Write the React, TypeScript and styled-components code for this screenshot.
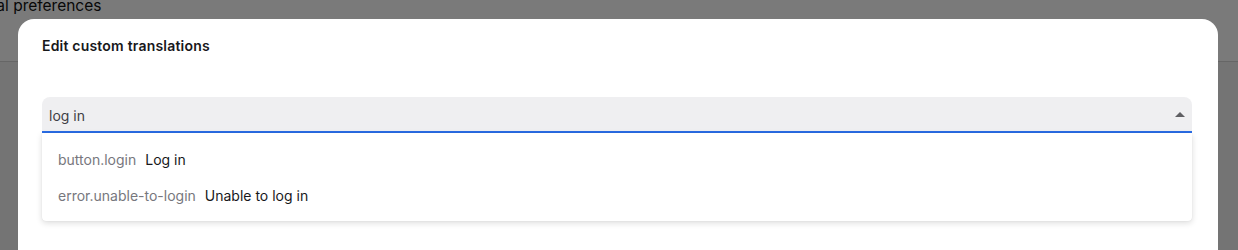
import React from "react";
import { createGlobalStyle, styled } from "styled-components";

const GlobalStyle = createGlobalStyle`
  html, body {
    margin: 0;
    padding: 0;
    background: #f2f2f2;
    font-family: Inter, "Noto Sans", "Liberation Sans", sans-serif;
  }
  #root {
    height: 250px;
    overflow: hidden;
  }
`;

type Option = {
  key: string;
  value: string;
};

const options: Option[] = [
  { key: "button.login", value: "Log in" },
  { key: "error.unable-to-login", value: "Unable to log in" },
];

function App() {
  return (
    <>
      <GlobalStyle />
      <Page>
        <Header>
          <PageTitle>Personal preferences</PageTitle>
        </Header>
        <Overlay>
          <Modal>
            <Title>Edit custom translations</Title>
            <Combo>
              <SearchField>
                <SearchInput defaultValue="log in" />
                <Arrow viewBox="0 0 10 5" aria-hidden="true">
                  <path d="M0 5 L5 0 L10 5 Z" />
                </Arrow>
              </SearchField>
              <Listbox>
                {options.map((opt) => (
                  <OptionRow key={opt.key}>
                    <OptionKey>{opt.key}</OptionKey>
                    <OptionValue>{opt.value}</OptionValue>
                  </OptionRow>
                ))}
              </Listbox>
            </Combo>
          </Modal>
        </Overlay>
      </Page>
    </>
  );
}

export default App;

const Page = styled.div`
  position: relative;
  height: 250px;
  overflow: hidden;
`;

const Header = styled.div`
  height: 62px;
  background: #ffffff;
  border-bottom: 1px solid #d6d6d6;
  box-sizing: border-box;
`;

const PageTitle = styled.h1`
  margin: 0 0 0 -55px;
  font-size: 15.5px;
  line-height: 12px;
  font-weight: 400;
  color: #111;
  white-space: nowrap;
`;

const Overlay = styled.div`
  position: absolute;
  inset: 0;
  background: rgba(0, 0, 0, 0.52);
  display: flex;
  justify-content: center;
  padding: 19px 20px 0 18px;
`;

const Modal = styled.div`
  flex: 1;
  height: 300px;
  background: #ffffff;
  border-radius: 16px;
  padding: 17px 26px 17px 24px;
  box-sizing: border-box;
  display: flex;
  flex-direction: column;
`;

const Title = styled.h2`
  margin: 0;
  font-size: 14px;
  letter-spacing: 0.2px;
  line-height: 20px;
  font-weight: 600;
  color: #18181b;
`;

const Combo = styled.div`
  margin-top: 41px;
  display: flex;
  flex-direction: column;
`;

const SearchField = styled.div`
  height: 36px;
  box-sizing: border-box;
  background: #efeff1;
  border-radius: 8px 8px 0 0;
  border-bottom: 2px solid #2a6de6;
  display: flex;
  align-items: center;
  padding: 2px 7px 0;
`;

const SearchInput = styled.input`
  flex: 1;
  border: none;
  outline: none;
  background: transparent;
  padding: 0;
  font-family: inherit;
  font-size: 14px;
  color: #3f3f46;
`;

const Arrow = styled.svg`
  width: 10px;
  height: 5px;
  fill: #5f5f63;
  margin-bottom: 1px;
`;

const Listbox = styled.ul`
  list-style: none;
  margin: 0;
  padding: 8px 0;
  background: #ffffff;
  border-radius: 0 0 4px 4px;
  box-shadow: 0 2px 6px rgba(0, 0, 0, 0.14), 0 0 1px rgba(0, 0, 0, 0.12);
`;

const OptionRow = styled.li`
  height: 36px;
  box-sizing: border-box;
  display: flex;
  align-items: center;
  gap: 9px;
  padding: 1px 16px 0;
  font-size: 14px;
`;

const OptionKey = styled.span`
  color: #77777d;
  font-size: 14px;
`;

const OptionValue = styled.span`
  color: #18181b;
`;
